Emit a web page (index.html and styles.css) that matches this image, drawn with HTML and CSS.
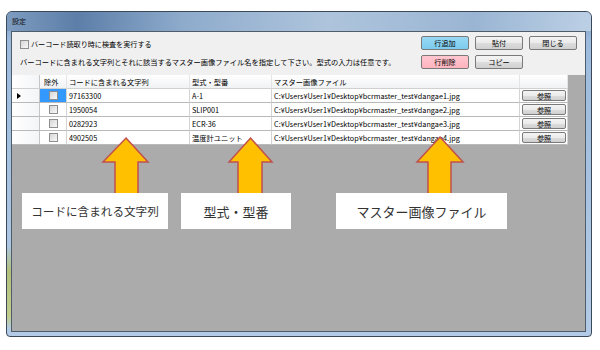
FILE: index.html
```html
<!DOCTYPE html>
<html lang="ja">
<head>
    <meta charset="UTF-8">
    <title>設定</title>
    <link rel="stylesheet" href="styles.css">
</head>
<body>
  <div class="window">
    <div class="titlebar">設定</div>
    <div class="client">

      <!-- options and buttons -->
      <div class="toolbar">
        <div class="options">
          <div class="check-line"><span class="checkbox"></span>バーコード読取り時に検査を実行する</div>
          <div class="hint">バーコードに含まれる文字列とそれに該当するマスター画像ファイル名を指定して下さい。型式の入力は任意です。</div>
        </div>
        <div class="buttons">
          <button class="btn btn-add">行追加</button>
          <button class="btn">貼付</button>
          <button class="btn">閉じる</button>
          <button class="btn btn-del">行削除</button>
          <button class="btn">コピー</button>
        </div>
      </div>

      <!-- data grid -->
      <div class="grid-area">
        <div class="grid">
          <div class="cell hd rowhd"></div>
          <div class="cell hd">除外</div>
          <div class="cell hd">コードに含まれる文字列</div>
          <div class="cell hd">型式・型番</div>
          <div class="cell hd">マスター画像ファイル</div>
          <div class="cell hd"></div>

          <div class="cell rowhd"><span class="pointer"></span></div>
          <div class="cell chk sel"><span class="checkbox"></span></div>
          <div class="cell">97163300</div>
          <div class="cell">A-1</div>
          <div class="cell">C:¥Users¥User1¥Desktop¥bcrmaster_test¥dangae1.jpg</div>
          <div class="cell btn-cell"><button class="btn">参照</button></div>

          <div class="cell rowhd"></div>
          <div class="cell chk"><span class="checkbox"></span></div>
          <div class="cell">1950054</div>
          <div class="cell">SLIP001</div>
          <div class="cell">C:¥Users¥User1¥Desktop¥bcrmaster_test¥dangae2.jpg</div>
          <div class="cell btn-cell"><button class="btn">参照</button></div>

          <div class="cell rowhd"></div>
          <div class="cell chk"><span class="checkbox"></span></div>
          <div class="cell">0282923</div>
          <div class="cell">ECR-36</div>
          <div class="cell">C:¥Users¥User1¥Desktop¥bcrmaster_test¥dangae3.jpg</div>
          <div class="cell btn-cell"><button class="btn">参照</button></div>

          <div class="cell rowhd"></div>
          <div class="cell chk"><span class="checkbox"></span></div>
          <div class="cell">4902505</div>
          <div class="cell">温度計ユニット</div>
          <div class="cell">C:¥Users¥User1¥Desktop¥bcrmaster_test¥dangae4.jpg</div>
          <div class="cell btn-cell"><button class="btn">参照</button></div>
        </div>
      </div>

    </div>
  </div>

  <!-- annotation arrows and labels -->
  <svg class="arrows" width="600" height="350" viewBox="0 0 600 350">
    <path d="M126 138 L148 162 L138 162 L138 196 L115 196 L115 162 L103 162 Z"/>
    <path d="M250.5 138 L272 162 L262 162 L262 196 L238 196 L238 162 L229 162 Z"/>
    <path d="M440 137 L463 162 L451 162 L451 196 L428 196 L428 162 L417 162 Z"/>
  </svg>
  <div class="callout callout-code">コードに含まれる文字列</div>
  <div class="callout callout-model">型式・型番</div>
  <div class="callout callout-file">マスター画像ファイル</div>
</body>
</html>
```

FILE: styles.css
```css
body {
    margin: 0;
    width: 600px;
    height: 350px;
    position: relative;
    overflow: hidden;
    background-color: #fff;
    font-family: "Noto Sans CJK JP", sans-serif;
    color: #000;
}
.window {
    margin: 11px 0 0 6px;
    width: 586px;
    height: 326px;
    box-sizing: border-box;
    border: 1px solid #3a4858;
    border-radius: 6px 6px 4px 4px;
    padding: 0 5px 4px 4px;
    display: flex;
    flex-direction: column;
    background:
        linear-gradient(180deg, transparent 72%, #b3c07a 80%, #c2cd8c 94%, transparent 98%) left top / 4px 100% no-repeat,
        linear-gradient(180deg, #7f9ec4 0, #9dbbdd 30px, #b3cbe6 100%);
}
.titlebar {
    height: 19px;
    line-height: 18px;
    font-size: 7px;
    color: #111;
    background: linear-gradient(90deg, #7e9cc0 0%, #5c7ea8 12%, #8eabcc 30%, #aec4dc 55%, #9ab5d3 80%, #bcd0e5 100%);
    margin: 0 -5px 0 -4px;
    padding-left: 5px;
    border-radius: 5px 5px 0 0;
}
.client {
    flex: 1;
    background-color: #f0f0f0;
    border: 1px solid #4f5d6b;
    display: flex;
    flex-direction: column;
}
.toolbar {
    height: 43px;
    box-sizing: border-box;
    padding: 0 8px;
    display: flex;
    justify-content: space-between;
}
.options {
    padding-top: 5px;
    display: flex;
    flex-direction: column;
    gap: 4px;
}
.check-line {
    height: 14px;
    display: flex;
    align-items: center;
    gap: 2px;
    font-size: 7.1px;
}
.hint {
    height: 14px;
    line-height: 14px;
    font-size: 7.25px;
    white-space: nowrap;
}
.checkbox {
    width: 9px;
    height: 9px;
    box-sizing: border-box;
    border: 1px solid #8e8f8f;
    background: linear-gradient(135deg, #d6d6d6, #f8f8f8);
}
.buttons {
    padding-top: 4px;
    display: grid;
    grid-template-columns: repeat(3, 48px);
    grid-auto-rows: 14px;
    column-gap: 6px;
    row-gap: 5px;
    align-content: start;
}
.btn {
    font-family: inherit;
    font-size: 7.1px;
    color: #000;
    padding: 0;
    border: 1px solid #7a7a7a;
    border-radius: 2px;
    background: linear-gradient(#f4f4f4 0%, #ebebeb 50%, #dddddd 51%, #d0d0d0 100%);
}
.btn-add {
    background: linear-gradient(#98d8f4, #7ccbee);
}
.btn-del {
    background: linear-gradient(#ffc6cf, #ffb4bf);
}
.grid-area {
    flex: 1;
    background-color: #ababab;
}
.grid {
    width: 556px;
    display: grid;
    grid-template-columns: 28px 27px 123px 82px 248px 48px;
    grid-auto-rows: 14px;
    font-size: 7.25px;
}
.cell {
    box-sizing: border-box;
    border-right: 1px solid #d4d4d4;
    border-bottom: 1px solid #b9b9b9;
    background-color: #fff;
    color: #000;
    padding-left: 2px;
    display: flex;
    align-items: center;
    white-space: nowrap;
    overflow: hidden;
}
.cell.hd {
    background: linear-gradient(#ffffff, #f1f2f4);
    border-right: 1px solid #e2e4e8;
    border-bottom: 1px solid #d0d0d0;
}
.cell.hd:nth-child(2) {
    padding-left: 4px;
}
.cell.rowhd {
    background: linear-gradient(90deg, #ffffff, #f4f5f7);
    border-right: 1px solid #c6c6c6;
    padding-left: 5px;
}
.pointer {
    width: 0;
    height: 0;
    border-left: 4px solid #000;
    border-top: 3px solid transparent;
    border-bottom: 3px solid transparent;
}
.cell.chk {
    justify-content: center;
    padding-left: 0;
}
.cell.sel {
    background-color: #3399ff;
}
.cell.btn-cell {
    padding: 1px 1px 1px 2px;
    align-items: stretch;
}
.cell.btn-cell .btn {
    width: 100%;
}
.arrows {
    position: absolute;
    top: 0;
    left: 0;
}
.arrows path {
    fill: #ffc000;
    stroke: #c0504d;
    stroke-width: 1.5;
}
.callout {
    position: absolute;
    top: 193px;
    height: 36px;
    background-color: #fff;
    display: flex;
    align-items: center;
    justify-content: center;
    color: #333;
    white-space: nowrap;
}
.callout-code {
    left: 22px;
    width: 146px;
    font-size: 11.6px;
}
.callout-model {
    left: 181px;
    width: 110px;
    font-size: 13px;
}
.callout-file {
    left: 336px;
    width: 171px;
    font-size: 13px;
}
```
